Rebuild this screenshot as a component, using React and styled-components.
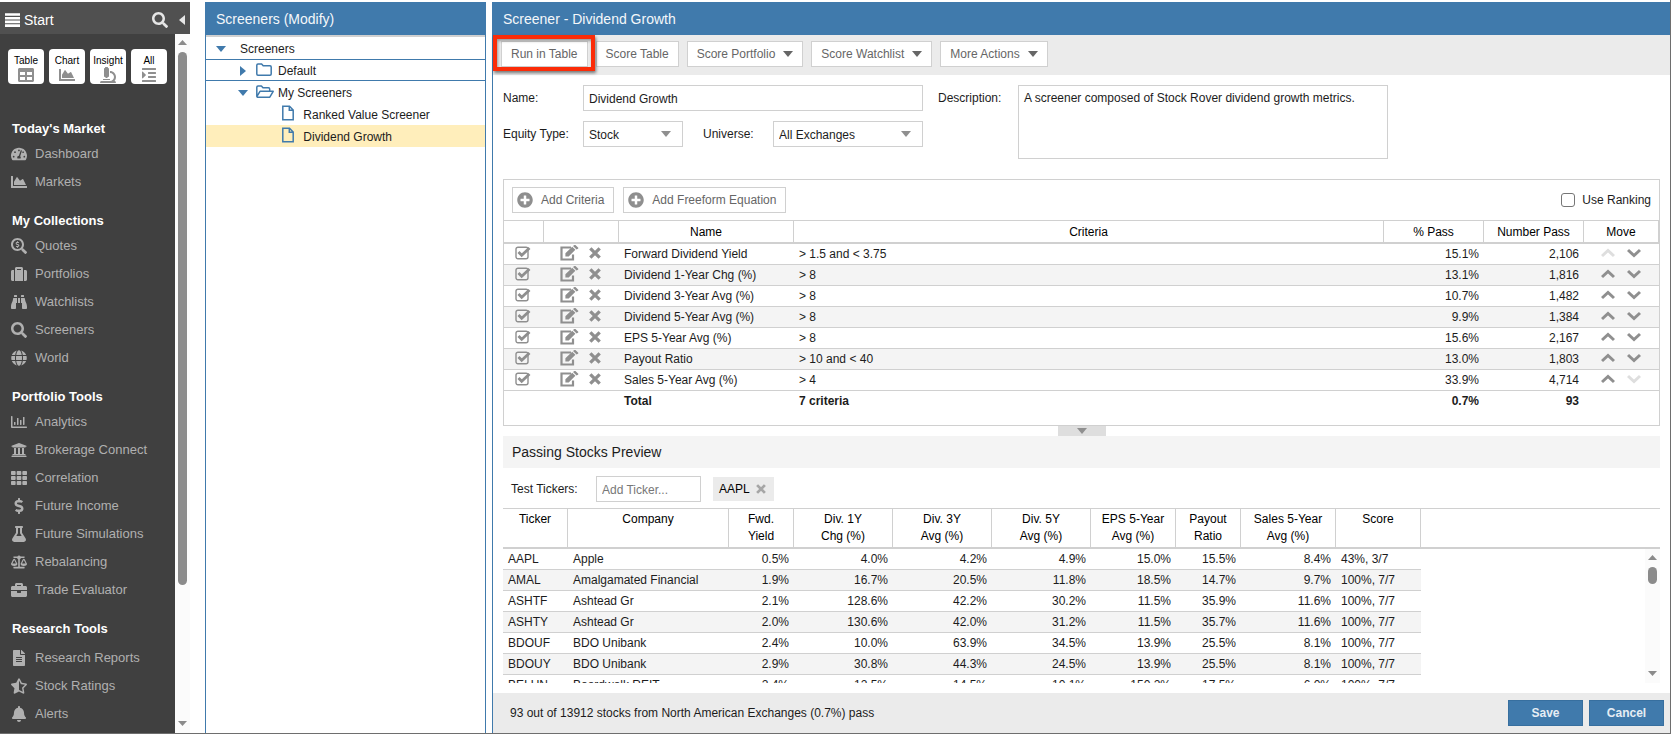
import React, { useState } from "react";
import styled, { createGlobalStyle, ThemeProvider } from "styled-components";
import {
  FaBalanceScale,
  FaBell,
  FaBinoculars,
  FaBriefcase,
  FaChartArea,
  FaDollarSign,
  FaFileAlt,
  FaFlask,
  FaGlobe,
  FaIndent,
  FaMicroscope,
  FaPlusCircle,
  FaRegChartBar,
  FaSearch,
  FaSearchDollar,
  FaStarHalfAlt,
  FaSuitcase,
  FaTable,
  FaTachometerAlt,
  FaTh,
  FaUniversity,
} from "react-icons/fa";

const theme = {
  primary: "#407aac",
  line: "#d0d0d0",
  bar: "#ebebeb",
  stripe: "#f4f4f4",
  icon: "#8f8f8f",
  text: "#1c1c1c",
  muted: "#666",
  sidebar: "#404040",
  sidebarHead: "#505050",
  sidebarText: "#b0b0b0",
  selected: "#ffeebb",
};

const GlobalStyle = createGlobalStyle`
  * {
    box-sizing: border-box;
  }
  body {
    margin: 0;
    background: white;
  }
  body, button, input, select, textarea {
    font-family: "Liberation Sans", Arial, sans-serif;
    font-size: 12px;
    line-height: 16px;
    color: ${theme.text};
  }
  button {
    cursor: pointer;
  }
`;

const Page = styled.div`
  height: 100vh;
  padding: 0 5px 7px 0;
`;

const Frame = styled.div`
  display: flex;
  height: 100%;
  padding-top: 2px;
  border-right: 1px solid #6e6e6e;
  border-bottom: 1px solid #6e6e6e;
`;

/* Sidebar */

const Sidebar = styled.nav`
  display: flex;
  flex-direction: column;
  flex: none;
  width: 190px;
  margin-right: 15px;
`;

const SidebarHead = styled.div`
  display: flex;
  align-items: center;
  flex: none;
  height: 32px;
  padding: 3px 5px 0;
  gap: 11px;
  background: ${(props) => props.theme.sidebarHead};
  color: #e6e6e6;
`;

const StartButton = styled.button`
  display: flex;
  align-items: center;
  gap: 4px;
  margin-right: auto;
  padding: 0;
  border: 0;
  background: none;
  color: white;
  font-size: 14px;
`;

const BareButton = styled.button`
  display: flex;
  align-items: center;
  padding: 0;
  border: 0;
  background: none;
  color: inherit;
`;

const SidebarBody = styled.div`
  display: flex;
  flex: 1;
  min-height: 0;
`;

const Menu = styled.div`
  flex: 1;
  overflow: hidden;
  padding: 15px 8px 0;
  background: ${(props) => props.theme.sidebar};
`;

const QuickRow = styled.div`
  display: flex;
  gap: 5px;
  margin-bottom: 34px;
`;

const QuickButton = styled.button`
  display: flex;
  flex-direction: column;
  align-items: center;
  flex: none;
  width: 36px;
  height: 35px;
  padding: 6px 0 0;
  border: 0;
  border-radius: 4px;
  background: white;
  color: black;
  font-size: 10px;
  line-height: 12px;
  svg {
    flex: none;
    width: 16px;
    height: 16px;
    color: ${(props) => props.theme.icon};
  }
`;

const MenuHeading = styled.h2`
  margin: 14px 0 ${(props) => (props.$spaced ? "4px" : "0")};
  padding-left: 4px;
  color: white;
  font-size: 13px;
  line-height: 22px;
`;

const MenuLink = styled.a`
  display: flex;
  align-items: center;
  gap: 8px;
  height: 28px;
  padding-left: 3px;
  color: ${(props) => props.theme.sidebarText};
  font-size: 13px;
  text-decoration: none;
  white-space: nowrap;
  svg {
    flex: none;
    width: 16px;
    height: 16px;
  }
`;

const ScrollTrack = styled.div`
  display: flex;
  flex-direction: column;
  align-items: center;
  justify-content: space-between;
  flex: none;
  width: 15px;
  padding: 6px 0 7px;
  background: #fbfbfb;
  color: #8b8b8b;
`;

const ScrollThumb = styled.div`
  width: 9px;
  height: ${(props) => props.$size};
  margin: 7px 0 auto;
  border-radius: 5px;
  background: #8b8b8b;
`;

/* Panels */

const PanelHead = styled.h1`
  flex: none;
  margin: 0;
  padding: 2px 10px 0;
  background: ${(props) => props.theme.primary};
  color: #f4f7fa;
  font-size: 14px;
  font-weight: normal;
  line-height: 31px;
`;

const TreePanel = styled.aside`
  flex: none;
  width: 281px;
  margin-right: 6px;
  border: solid ${(props) => props.theme.primary};
  border-width: 0 1px;
`;

const Tree = styled.ul`
  margin: 0;
  padding: 0;
  border-top: 2px solid ${(props) => props.theme.line};
  list-style: none;
`;

const TreeRow = styled.li`
  display: flex;
  align-items: center;
  height: 22px;
  padding: 1px 0 0 ${(props) => 10 + props.$level * 22}px;
  border: 1px solid
    ${(props) => (props.$focused ? props.theme.primary : "transparent")};
  border-width: 1px 0;
  background: ${(props) =>
    props.$selected ? props.theme.selected : "transparent"};
  background-clip: border-box;
`;

const TreeArrow = styled.span`
  display: flex;
  justify-content: center;
  width: 10px;
  margin-right: ${(props) => (props.$root ? "14px" : "8px")};
  color: ${(props) => props.theme.primary};
`;

const TreeIcon = styled.span`
  display: flex;
  width: ${(props) => (props.$wide ? "22px" : "18px")};
  padding-bottom: 3px;
  color: ${(props) => props.theme.primary};
`;

const MainPanel = styled.main`
  display: flex;
  flex-direction: column;
  flex: 1;
  min-width: 0;
  border-left: 1px solid ${(props) => props.theme.primary};
`;

const Toolbar = styled.div`
  display: flex;
  align-items: center;
  flex: none;
  gap: 8px;
  height: 40px;
  padding: 0 8px 2px;
  background: ${(props) => props.theme.bar};
`;

const Button = styled.button`
  display: flex;
  align-items: center;
  gap: 8px;
  height: 26px;
  padding: 0 9px 0 ${(props) => (props.$icon ? "4px" : "9px")};
  border: 1px solid ${(props) => props.theme.line};
  background: white;
  color: ${(props) => props.theme.muted};
  white-space: nowrap;
  svg {
    color: ${(props) => (props.$icon ? props.theme.icon : "inherit")};
  }
`;

const Highlighted = styled.div`
  position: relative;
  &::after {
    content: "";
    position: absolute;
    inset: -6px -7px -4px -8px;
    border: 4px solid #fb2c08;
    box-shadow: 1px 2px 3px rgba(0, 0, 0, 0.5),
      inset 1px 2px 3px rgba(0, 0, 0, 0.35);
    pointer-events: none;
  }
`;

const Form = styled.form`
  display: flex;
  flex: none;
  padding: 10px 10px 20px;
`;

const Fields = styled.div`
  display: grid;
  grid-template-columns: 80px 100px 20px 70px 150px;
  gap: 10px 0;
  align-content: start;
  margin-right: 15px;
`;

const Label = styled.label`
  padding-top: 5px;
  grid-column: ${(props) => props.$column || "auto"};
`;

const TextInput = styled.input`
  width: ${(props) => props.$width || "100%"};
  height: 26px;
  grid-column: ${(props) => props.$column || "auto"};
  padding: 2px 5px 0;
  border: 1px solid ${(props) => props.theme.line};
  &::placeholder {
    color: #777;
  }
`;

const SelectBox = styled.div`
  display: grid;
  align-items: center;
  color: ${(props) => props.theme.icon};
  > * {
    grid-area: 1 / 1;
  }
  > svg {
    justify-self: end;
    margin-right: 12px;
    pointer-events: none;
  }
`;

const Select = styled.select`
  width: 100%;
  height: 26px;
  padding: 2px 5px 0;
  appearance: none;
  border: 1px solid ${(props) => props.theme.line};
  border-radius: 0;
  background: white;
`;

const Description = styled.div`
  display: grid;
  grid-template-columns: 80px minmax(0, 370px);
  flex: 1;
`;

const TextArea = styled.textarea`
  height: 74px;
  padding: 4px 5px;
  border: 1px solid ${(props) => props.theme.line};
  resize: none;
`;

/* Criteria */

const CriteriaBox = styled.section`
  flex: none;
  margin: 0 10px;
  padding-bottom: 13px;
  border: 1px solid ${(props) => props.theme.line};
`;

const CriteriaBar = styled.div`
  display: flex;
  align-items: center;
  gap: 9px;
  height: 40px;
  padding: 0 8px;
`;

const CheckLabel = styled.label`
  display: flex;
  align-items: center;
  gap: 7px;
  margin-left: auto;
`;

const Checkbox = styled.input`
  width: 14px;
  height: 14px;
  margin: 0;
  appearance: none;
  border: 1px solid #767676;
  border-radius: 3px;
  background: white;
  &:checked {
    background: ${(props) => props.theme.icon};
  }
`;

const Table = styled.table`
  width: ${(props) => props.$width || "100%"};
  table-layout: fixed;
  border-collapse: separate;
  border-spacing: 0;
`;

const HeadCell = styled.th`
  height: 24px;
  padding: 0;
  border: solid ${(props) => props.theme.line};
  border-width: 1px 1px 2px 0;
  color: black;
  font-weight: normal;
`;

const PreviewHeadCell = styled.th`
  height: 38px;
  padding: 2px 0 0;
  border-right: 1px solid ${(props) => props.theme.line};
  color: black;
  font-weight: normal;
  line-height: 17px;
  vertical-align: top;
  white-space: pre-line;
`;

const Row = styled.tr`
  background: ${(props) => (props.$striped ? props.theme.stripe : "white")};
  font-weight: ${(props) => (props.$total ? "bold" : "normal")};
`;

const Cell = styled.td`
  height: 21px;
  padding: 0 5px;
  border-bottom: 1px solid
    ${(props) => (props.$plain ? "transparent" : props.theme.line)};
  text-align: ${(props) => props.$align || "left"};
  white-space: nowrap;
`;

const CellIcons = styled.div`
  display: flex;
  align-items: center;
  justify-content: center;
  gap: ${(props) => props.$gap || "0"};
  padding: 0 2px 2px 0;
  color: ${(props) => props.theme.icon};
`;

const MoveButton = styled(BareButton)`
  color: ${(props) => props.theme.icon};
  &:disabled {
    color: #dedede;
  }
`;

const TickBox = styled.label`
  display: grid;
  > * {
    grid-area: 1 / 1;
  }
  input {
    width: 16px;
    height: 14px;
    margin: 0;
    opacity: 0;
  }
  input:not(:checked) + svg path {
    display: none;
  }
`;

const Collapser = styled.button`
  display: flex;
  align-items: center;
  justify-content: center;
  flex: none;
  align-self: center;
  width: 48px;
  height: 10px;
  padding: 0;
  border: 0;
  background: #dedede;
  color: ${(props) => props.theme.icon};
`;

/* Preview */

const Preview = styled.section`
  display: flex;
  flex-direction: column;
  flex: 1;
  min-height: 0;
  margin: 0 10px 10px;
`;

const PreviewHead = styled.h2`
  flex: none;
  margin: 0;
  padding: 0 9px;
  background: ${(props) => props.theme.stripe};
  font-size: 14px;
  font-weight: normal;
  line-height: 32px;
`;

const TickerRow = styled.div`
  display: flex;
  align-items: center;
  flex: none;
  height: 40px;
  padding: 2px 8px 0;
`;

const TickerLabel = styled.label`
  width: 85px;
`;

const Chip = styled.span`
  display: flex;
  align-items: center;
  gap: 6px;
  height: 24px;
  margin-left: 12px;
  padding: 0 8px 0 6px;
  background: ${(props) => props.theme.bar};
  color: black;
`;

const ChipButton = styled(BareButton)`
  color: #a6a6a6;
`;

const PreviewHeader = styled.div`
  flex: none;
  border: solid ${(props) => props.theme.line};
  border-width: 1px 0 2px;
`;

const PreviewBody = styled.div`
  display: flex;
  justify-content: space-between;
  flex: 1;
  min-height: 0;
  overflow: hidden;
`;

const Footer = styled.footer`
  display: flex;
  align-items: center;
  flex: none;
  gap: 6px;
  height: 40px;
  padding: 0 6px 0 17px;
  background: ${(props) => props.theme.bar};
`;

const FooterText = styled.span`
  margin-right: auto;
`;

const PrimaryButton = styled.button`
  width: 75px;
  height: 26px;
  padding: 0;
  border: 1px solid #376f9f;
  background: ${(props) => props.theme.primary};
  color: #e6edf4;
  font-weight: bold;
`;

/* Icons */

const Triangle = ({ dir = "down", w = 10, h = 6 }) => {
  const points = {
    down: `0,0 ${w},0 ${w / 2},${h}`,
    up: `0,${h} ${w},${h} ${w / 2},0`,
    right: `0,0 ${w},${h / 2} 0,${h}`,
    left: `${w},0 ${w},${h} 0,${h / 2}`,
  };
  return (
    <svg width={w} height={h} aria-hidden="true">
      <polygon points={points[dir]} fill="currentColor" />
    </svg>
  );
};

const Bars = () => (
  <svg width="15" height="14" aria-hidden="true">
    <path
      d="M0 1.5h15M0 5.2h15M0 8.9h15M0 12.6h15"
      stroke="currentColor"
      strokeWidth="2.6"
    />
  </svg>
);

const Folder = () => (
  <svg width="16" height="13" fill="none" stroke="currentColor">
    <path
      d="M.8 2.2Q.8 1 2 1h3.6l1.6 1.8H14q1.2 0 1.2 1.2v7q0 1.2-1.2 1.2H2Q.8 12.200.8 11z"
      strokeWidth="1.5"
    />
  </svg>
);

const FolderOpen = () => (
  <svg width="18" height="13" fill="none" stroke="currentColor">
    <path
      d="M.8 11V2.200Q.8 1 2 1h3.400l1.600 1.800h5.500q1.200 0 1.200 1.200v1.800M.8 11.600l3.200-5.300h13.200l-3.400 5.900H1.500z"
      strokeWidth="1.5"
      strokeLinejoin="round"
    />
  </svg>
);

const File = () => (
  <svg width="12" height="16" fill="none" stroke="currentColor">
    <path d="M.8 1.200h6.700l3.700 3.800v9.800H.8zM7.300 1.200v4h4" strokeWidth="1.5" />
  </svg>
);

const Tick = () => (
  <svg width="16" height="14" fill="none" stroke="currentColor">
    <rect x="1" y="1.2" width="12" height="11.6" rx="2" strokeWidth="1.4" />
    <path d="M3.5 6l3.2 3.3L14.5 2" strokeWidth="2.8" />
  </svg>
);

const Edit = () => (
  <svg width="19" height="16" fill="none" stroke="currentColor">
    <path d="M11 2.500H1.500V14.500H13V9.500" strokeWidth="2.2" />
    <path
      d="M5.400 11.500V8.300L12.200 1.700l3.200 3-6.700 6.800zM13 1l1.400-1h1l2.900 2.700v.8l-1.700 1z"
      fill="currentColor"
      stroke="none"
    />
  </svg>
);

const Cross = ({ size = 12 }) => (
  <svg width={size} height={size} viewBox="0 0 11 11">
    <path d="M1.2 1.2l8.600 8.600M9.800 1.200l-8.600 8.600" stroke="currentColor" strokeWidth="3" />
  </svg>
);

const Chevron = ({ up }) => (
  <svg width="14" height="10" fill="none" stroke="currentColor">
    <path d={up ? "M1 8l6-5.500L13 8" : "M1 2l6 5.500L13 2"} strokeWidth="3" />
  </svg>
);

const menu = [
  {
    title: "Today's Market",
    items: [
      ["Dashboard", FaTachometerAlt],
      ["Markets", FaChartArea],
    ],
  },
  {
    title: "My Collections",
    items: [
      ["Quotes", FaSearchDollar],
      ["Portfolios", FaSuitcase],
      ["Watchlists", FaBinoculars],
      ["Screeners", FaSearch],
      ["World", FaGlobe],
    ],
  },
  {
    title: "Portfolio Tools",
    items: [
      ["Analytics", FaRegChartBar],
      ["Brokerage Connect", FaUniversity],
      ["Correlation", FaTh],
      ["Future Income", FaDollarSign],
      ["Future Simulations", FaFlask],
      ["Rebalancing", FaBalanceScale],
      ["Trade Evaluator", FaBriefcase],
    ],
  },
  {
    title: "Research Tools",
    spaced: true,
    items: [
      ["Research Reports", FaFileAlt],
      ["Stock Ratings", FaStarHalfAlt],
      ["Alerts", FaBell],
    ],
  },
];

const quick = [
  ["Table", FaTable],
  ["Chart", FaChartArea],
  ["Insight", FaMicroscope],
  ["All", FaIndent],
];

const criteria = [
  ["Forward Dividend Yield", "> 1.5 and < 3.75", "15.1%", "2,106"],
  ["Dividend 1-Year Chg (%)", "> 8", "13.1%", "1,816"],
  ["Dividend 3-Year Avg (%)", "> 8", "10.7%", "1,482"],
  ["Dividend 5-Year Avg (%)", "> 8", "9.9%", "1,384"],
  ["EPS 5-Year Avg (%)", "> 8", "15.6%", "2,167"],
  ["Payout Ratio", "> 10 and < 40", "13.0%", "1,803"],
  ["Sales 5-Year Avg (%)", "> 4", "33.9%", "4,714"],
];

const columns = [
  ["Ticker", 65],
  ["Company", 161],
  ["Fwd.\nYield", 65],
  ["Div. 1Y\nChg (%)", 99],
  ["Div. 3Y\nAvg (%)", 99],
  ["Div. 5Y\nAvg (%)", 99],
  ["EPS 5-Year\nAvg (%)", 85],
  ["Payout\nRatio", 65],
  ["Sales 5-Year\nAvg (%)", 95],
  ["Score", 85],
];

const stocks = [
  ["AAPL", "Apple", "0.5%", "4.0%", "4.2%", "4.9%", "15.0%", "15.5%", "8.4%", "43%, 3/7"],
  ["AMAL", "Amalgamated Financial", "1.9%", "16.7%", "20.5%", "11.8%", "18.5%", "14.7%", "9.7%", "100%, 7/7"],
  ["ASHTF", "Ashtead Gr", "2.1%", "128.6%", "42.2%", "30.2%", "11.5%", "35.9%", "11.6%", "100%, 7/7"],
  ["ASHTY", "Ashtead Gr", "2.0%", "130.6%", "42.0%", "31.2%", "11.5%", "35.7%", "11.6%", "100%, 7/7"],
  ["BDOUF", "BDO Unibank", "2.4%", "10.0%", "63.9%", "34.5%", "13.9%", "25.5%", "8.1%", "100%, 7/7"],
  ["BDOUY", "BDO Unibank", "2.9%", "30.8%", "44.3%", "24.5%", "13.9%", "25.5%", "8.1%", "100%, 7/7"],
  ["BEI.UN", "Boardwalk REIT", "2.4%", "12.5%", "14.5%", "10.1%", "150.2%", "17.5%", "6.0%", "100%, 7/7"],
];

const SideMenu = () => (
  <Sidebar>
    <SidebarHead>
      <StartButton type="button">
        <Bars />
        Start
      </StartButton>
      <BareButton type="button" aria-label="Search">
        <FaSearch size={16} />
      </BareButton>
      <BareButton type="button" aria-label="Collapse menu">
        <Triangle dir="left" w={6} h={10} />
      </BareButton>
    </SidebarHead>
    <SidebarBody>
      <Menu>
        <QuickRow>
          {quick.map(([name, Icon]) => (
            <QuickButton type="button" key={name}>
              {name}
              <Icon />
            </QuickButton>
          ))}
        </QuickRow>
        {menu.map((group) => (
          <React.Fragment key={group.title}>
            <MenuHeading $spaced={group.spaced}>{group.title}</MenuHeading>
            {group.items.map(([name, Icon]) => (
              <MenuLink href="#" key={name}>
                <Icon />
                {name}
              </MenuLink>
            ))}
          </React.Fragment>
        ))}
      </Menu>
      <ScrollTrack>
        <Triangle dir="up" w={9} h={5} />
        <ScrollThumb $size="533px" />
        <Triangle w={9} h={5} />
      </ScrollTrack>
    </SidebarBody>
  </Sidebar>
);

const ScreenerTree = () => (
  <TreePanel>
    <PanelHead>Screeners (Modify)</PanelHead>
    <Tree>
      <TreeRow $level={0}>
        <TreeArrow $root>
          <Triangle />
        </TreeArrow>
        Screeners
      </TreeRow>
      <TreeRow $level={1} $focused>
        <TreeArrow>
          <Triangle dir="right" w={6} h={10} />
        </TreeArrow>
        <TreeIcon $wide>
          <Folder />
        </TreeIcon>
        Default
      </TreeRow>
      <TreeRow $level={1}>
        <TreeArrow>
          <Triangle />
        </TreeArrow>
        <TreeIcon $wide>
          <FolderOpen />
        </TreeIcon>
        My Screeners
      </TreeRow>
      <TreeRow $level={3}>
        <TreeIcon>
          <File />
        </TreeIcon>
        &nbsp;Ranked Value Screener
      </TreeRow>
      <TreeRow $level={3} $selected>
        <TreeIcon>
          <File />
        </TreeIcon>
        &nbsp;Dividend Growth
      </TreeRow>
    </Tree>
  </TreePanel>
);

const CriteriaTable = () => (
  <Table>
    <colgroup>
      <col width="40" />
      <col width="75" />
      <col width="175" />
      <col />
      <col width="100" />
      <col width="100" />
      <col width="75" />
    </colgroup>
    <thead>
      <tr>
        <HeadCell />
        <HeadCell />
        <HeadCell>Name</HeadCell>
        <HeadCell>Criteria</HeadCell>
        <HeadCell>% Pass</HeadCell>
        <HeadCell>Number Pass</HeadCell>
        <HeadCell>Move</HeadCell>
      </tr>
    </thead>
    <tbody>
      {criteria.map(([name, rule, percent, count], i) => (
        <Row key={name} $striped={i % 2 === 1}>
          <Cell>
            <CellIcons>
              <TickBox>
                <input type="checkbox" aria-label={name} defaultChecked />
                <Tick />
              </TickBox>
            </CellIcons>
          </Cell>
          <Cell>
            <CellIcons $gap="10px">
              <BareButton type="button" aria-label="Edit">
                <Edit />
              </BareButton>
              <BareButton type="button" aria-label="Remove">
                <Cross />
              </BareButton>
            </CellIcons>
          </Cell>
          <Cell>{name}</Cell>
          <Cell>{rule}</Cell>
          <Cell $align="right">{percent}</Cell>
          <Cell $align="right">{count}</Cell>
          <Cell>
            <CellIcons $gap="12px">
              <MoveButton type="button" aria-label="Move up" disabled={i === 0}>
                <Chevron up />
              </MoveButton>
              <MoveButton
                type="button"
                aria-label="Move down"
                disabled={i === criteria.length - 1}
              >
                <Chevron />
              </MoveButton>
            </CellIcons>
          </Cell>
        </Row>
      ))}
      <Row $total>
        <Cell $plain />
        <Cell $plain />
        <Cell $plain>Total</Cell>
        <Cell $plain>7 criteria</Cell>
        <Cell $plain $align="right">
          0.7%
        </Cell>
        <Cell $plain $align="right">
          93
        </Cell>
        <Cell $plain />
      </Row>
    </tbody>
  </Table>
);

const PreviewColumns = () => (
  <colgroup>
    {columns.map(([name, width]) => (
      <col key={name} width={width} />
    ))}
  </colgroup>
);

const PreviewTable = () => (
  <>
    <PreviewHeader>
      <Table $width="918px">
        <PreviewColumns />
        <thead>
          <tr>
            {columns.map(([name]) => (
              <PreviewHeadCell key={name}>{name}</PreviewHeadCell>
            ))}
          </tr>
        </thead>
      </Table>
    </PreviewHeader>
    <PreviewBody>
      <div>
        <Table $width="918px">
          <PreviewColumns />
          <tbody>
            {stocks.map((stock, i) => (
              <Row key={stock[0]} $striped={i % 2 === 1}>
                {stock.map((value, n) => (
                  <Cell key={n} $align={n > 1 && n < 9 ? "right" : "left"}>
                    {value}
                  </Cell>
                ))}
              </Row>
            ))}
          </tbody>
        </Table>
      </div>
      <ScrollTrack>
        <Triangle dir="up" w={9} h={5} />
        <ScrollThumb $size="17px" />
        <Triangle w={9} h={5} />
      </ScrollTrack>
    </PreviewBody>
  </>
);

const App = () => {
  const [name, setName] = useState("Dividend Growth");

  return (
    <ThemeProvider theme={theme}>
      <GlobalStyle />
      <Page>
        <Frame>
          <SideMenu />
          <ScreenerTree />
          <MainPanel>
            <PanelHead>Screener - {name}</PanelHead>
            <Toolbar>
              <Highlighted>
                <Button type="button">Run in Table</Button>
              </Highlighted>
              <Button type="button">Score Table</Button>
              {["Score Portfolio", "Score Watchlist", "More Actions"].map(
                (label) => (
                  <Button type="button" key={label}>
                    {label}
                    <Triangle />
                  </Button>
                )
              )}
            </Toolbar>
            <Form>
              <Fields>
                <Label htmlFor="name">Name:</Label>
                <TextInput
                  id="name"
                  $column="2 / -1"
                  value={name}
                  onChange={(e) => setName(e.target.value)}
                />
                <Label htmlFor="equity">Equity Type:</Label>
                <SelectBox>
                  <Select id="equity">
                    <option>Stock</option>
                    <option>ETF</option>
                  </Select>
                  <Triangle />
                </SelectBox>
                <Label htmlFor="universe" $column="4">
                  Universe:
                </Label>
                <SelectBox>
                  <Select id="universe">
                    <option>All Exchanges</option>
                    <option>North American Exchanges</option>
                  </Select>
                  <Triangle />
                </SelectBox>
              </Fields>
              <Description>
                <Label htmlFor="description">Description:</Label>
                <TextArea
                  id="description"
                  defaultValue="A screener composed of Stock Rover dividend growth metrics."
                />
              </Description>
            </Form>
            <CriteriaBox>
              <CriteriaBar>
                <Button type="button" $icon>
                  <FaPlusCircle size={16} />
                  Add Criteria
                </Button>
                <Button type="button" $icon>
                  <FaPlusCircle size={16} />
                  Add Freeform Equation
                </Button>
                <CheckLabel>
                  <Checkbox type="checkbox" />
                  Use Ranking
                </CheckLabel>
              </CriteriaBar>
              <CriteriaTable />
            </CriteriaBox>
            <Collapser type="button" aria-label="Collapse criteria">
              <Triangle />
            </Collapser>
            <Preview>
              <PreviewHead>Passing Stocks Preview</PreviewHead>
              <TickerRow>
                <TickerLabel htmlFor="ticker">Test Tickers:</TickerLabel>
                <TextInput
                  id="ticker"
                  $width="105px"
                  placeholder="Add Ticker..."
                />
                <Chip>
                  AAPL
                  <ChipButton type="button" aria-label="Remove AAPL">
                    <Cross size={10} />
                  </ChipButton>
                </Chip>
              </TickerRow>
              <PreviewTable />
            </Preview>
            <Footer>
              <FooterText>
                93 out of 13912 stocks from North American Exchanges (0.7%) pass
              </FooterText>
              <PrimaryButton type="button">Save</PrimaryButton>
              <PrimaryButton type="button">Cancel</PrimaryButton>
            </Footer>
          </MainPanel>
        </Frame>
      </Page>
    </ThemeProvider>
  );
};

export default App;
